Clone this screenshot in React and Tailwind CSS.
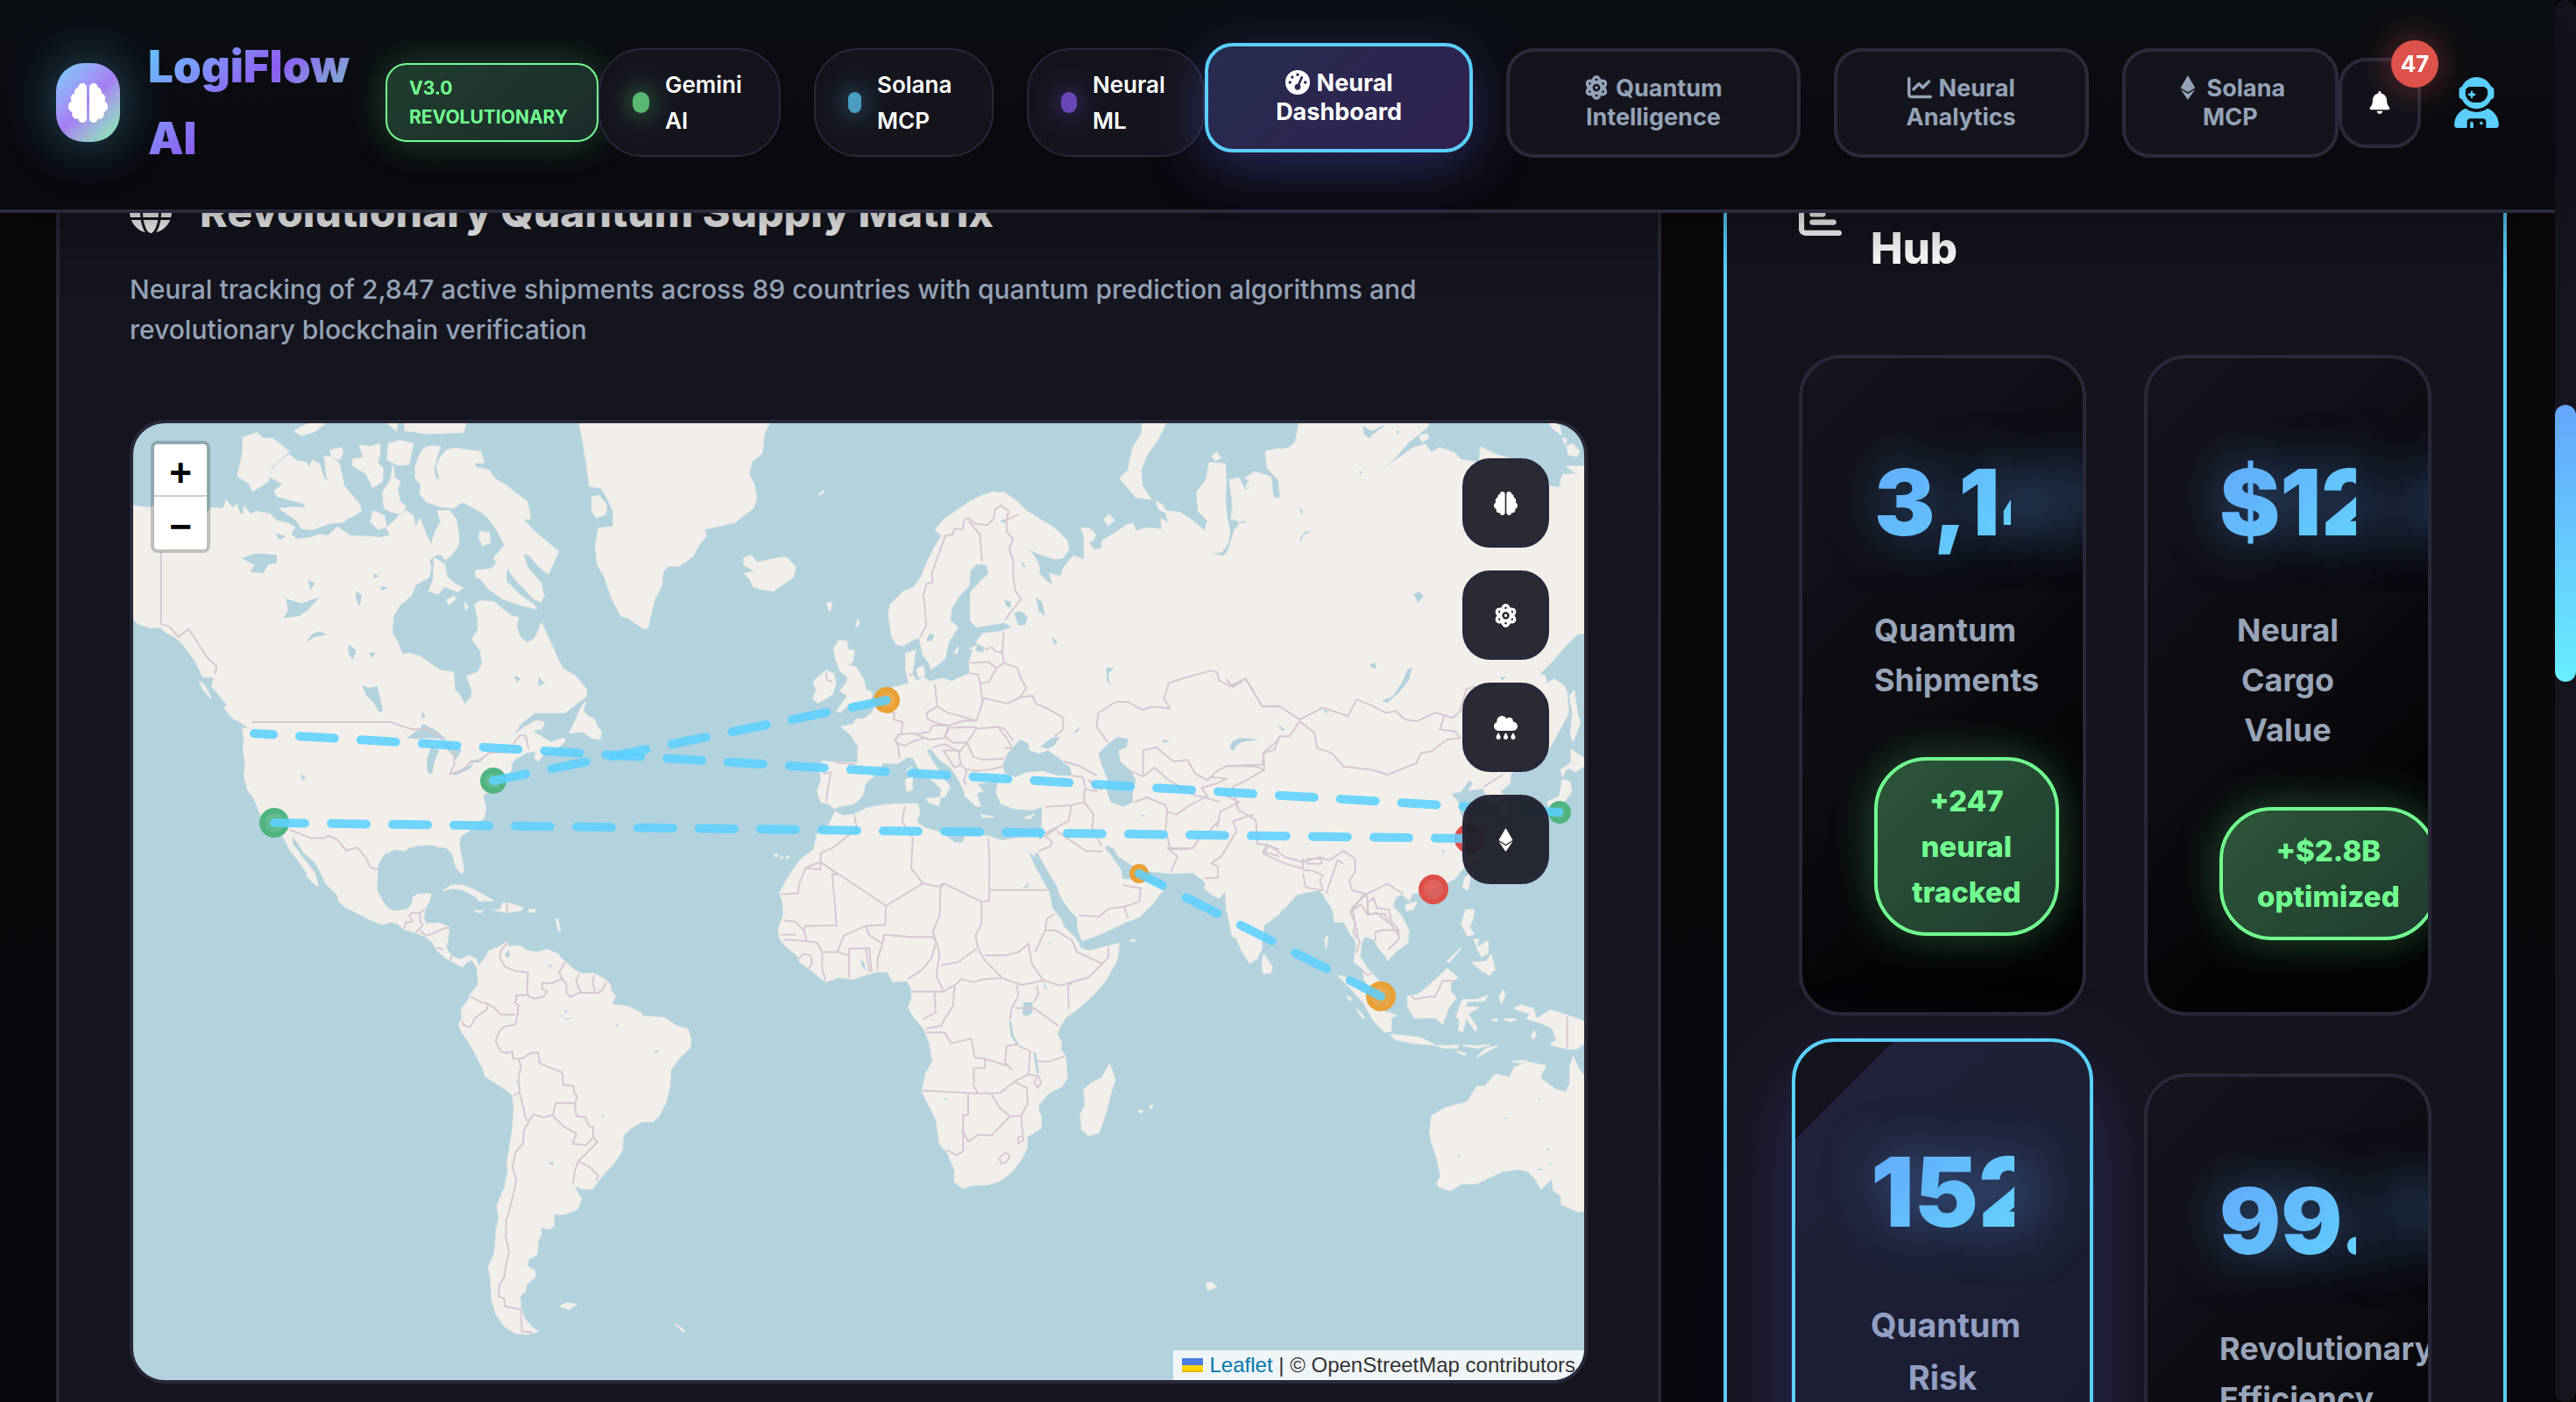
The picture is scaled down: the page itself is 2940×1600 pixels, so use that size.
import { useState } from 'react'
import {
  FaAtom,
  FaBell,
  FaBrain,
  FaChartBar,
  FaChartLine,
  FaCloudRain,
  FaEthereum,
  FaGaugeHigh,
  FaGlobe,
  FaUserAstronaut,
} from 'react-icons/fa6'

const statuses = [
  { lines: ['Gemini', 'AI'], box: 'w-[208px]', dot: 'w-[19px] bg-[#59b872] shadow-[0_0_30px_#59b872]' },
  { lines: ['Solana', 'MCP'], box: 'w-[205px]', dot: 'w-[15px] bg-[#4a9dc0] shadow-[0_0_30px_#4a9dc0]' },
  { lines: ['Neural', 'ML'], box: 'w-[203px]', dot: 'w-[18px] bg-[#6748b4] shadow-[0_0_30px_#6748b4]' },
]

const tabs = [
  { id: 'dashboard', icon: FaGaugeHigh, lines: ['Neural', 'Dashboard'] },
  { id: 'quantum', icon: FaAtom, lines: ['Quantum', 'Intelligence'] },
  { id: 'analytics', icon: FaChartLine, lines: ['Neural', 'Analytics'] },
  { id: 'solana', icon: FaEthereum, lines: ['Solana', 'MCP'] },
]

const layers = [
  { name: 'Neural layer', icon: FaBrain },
  { name: 'Quantum layer', icon: FaAtom },
  { name: 'Weather layer', icon: FaCloudRain },
  { name: 'Blockchain layer', icon: FaEthereum },
]

const stats = [
  { value: '3,147', label: ['Quantum', 'Shipments'], change: '+247 neural tracked' },
  { value: '$12.8B', label: ['Neural', 'Cargo', 'Value'], change: '+$2.8B optimized' },
  { value: '152', label: ['Quantum', 'Risk'], active: true },
  { value: '99.7%', label: ['Revolutionary', 'Efficiency'] },
]

const routes = [
  { from: [290, 838], to: [1780, 928], offset: 18 },
  { from: [313, 940], to: [1677, 958], offset: 5 },
  { from: [563, 892], to: [1012, 800], offset: 2 },
  { from: [1300, 998], to: [1576, 1138], offset: 10 },
]

const ports = [
  { at: [313, 940], r: 14, color: '#4fb47f' },
  { at: [563, 892], r: 12, color: '#4fb47f' },
  { at: [1012, 800], r: 12, color: '#e9a035' },
  { at: [1300, 998], r: 8, color: '#e9a035' },
  { at: [1780, 928], r: 10, color: '#4fb47f' },
  { at: [1677, 958], r: 14, color: '#de4f49' },
  { at: [1636, 1016], r: 14, color: '#de4f49' },
  { at: [1576, 1138], r: 14, color: '#e9a035' },
]

// One sheet per part of the world, each with its own grid
const sheets = [
  {
    // North America, Greenland, Iceland
    transform: 'translate(140 470) scale(0.5102 0.3571)',
    land: [
      '24,303 60,310 72,303 120,318 150,310 190,325 200,310 225,312 232,285 245,312 255,300 262,330 270,330 272,305 285,330 300,322 330,330 345,352 370,360 385,372 375,395 390,410 420,405 440,395 460,400 480,372 510,400 550,402 575,405 600,398 590,375 610,350 618,335 635,320 650,335 655,375 665,345 680,400 690,430 700,385 712,355 705,320 730,318 745,345 752,400 750,430 735,460 722,475 712,458 695,462 685,480 690,500 685,530 655,555 645,590 620,620 605,655 602,710 615,740 625,780 640,775 665,785 690,810 712,830 740,835 742,890 752,905 765,940 780,915 782,890 770,848 795,835 805,805 800,765 782,730 795,700 795,665 788,620 800,608 830,610 855,640 870,655 885,660 880,690 890,725 905,742 920,730 930,705 937,678 950,720 960,750 972,790 985,825 1010,845 1020,860 1037,890 1037,912 1010,940 990,963 920,965 890,1000 870,1042 900,1010 925,990 942,995 938,1015 915,1022 940,1045 960,1060 985,1046 990,1054 970,1080 945,1090 930,1118 922,1110 925,1088 905,1090 880,1110 870,1125 868,1150 850,1170 860,1185 822,1210 805,1230 812,1270 808,1300 785,1330 755,1360 752,1385 760,1440 763,1470 758,1478 745,1455 738,1415 725,1395 705,1392 690,1385 660,1388 640,1395 630,1405 610,1400 585,1415 570,1450 568,1530 573,1568 485,1568 480,1545 455,1510 440,1465 430,1440 405,1410 385,1365 378,1362 380,1385 400,1425 415,1450 430,1480 437,1518 425,1505 410,1470 390,1430 375,1405 365,1375 355,1350 340,1340 310,1295 295,1240 280,1210 272,1165 275,1130 270,1080 272,1050 268,1015 285,1015 270,1000 245,980 228,950 235,940 215,905 200,880 205,850 180,850 165,805 150,775 135,745 120,725 95,705 85,690 60,692 35,680 24,665',
      '270,85 300,70 315,88 335,88 372,130 335,175 325,225 310,240 290,255 283,230 257,208 268,140',
      '372,140 390,160 410,165 418,182 425,158 440,170 450,215 460,228 455,190 452,145 470,150 485,170 495,240 530,300 533,320 515,335 500,345 495,355 465,358 440,370 425,378 400,375 390,350 365,325 352,312 385,308 410,310 405,295 345,272 340,255 360,235 330,210 335,190 345,170',
      '465,125 490,118 492,135 485,155 468,145',
      '530,110 555,115 575,105 575,140 570,165 582,185 580,225 560,245 545,200 515,175 515,155 540,150',
      '595,105 620,95 650,105 640,170 615,172 592,155',
      '605,175 600,220 582,260 585,310 600,322 625,330 633,305 620,290 615,250 620,225 608,215',
      '385,65 400,50 415,42 415,30 460,30 430,65 400,78',
      '585,30 615,30 612,62',
      '630,30 770,30 762,68 680,72 650,65 632,62',
      '655,180 665,140 675,118 690,112 710,115 702,150 695,190 700,215 710,222 703,180 710,150 725,125 745,120 770,125 800,130 808,165 785,165 790,180 820,190 830,215 860,240 880,265 905,290 912,345 895,345 920,385 950,420 975,450 965,480 952,520 930,495 910,460 895,455 905,500 935,550 942,590 935,610 920,600 880,540 865,510 860,545 885,585 920,620 925,632 890,620 850,600 820,570 800,535 790,530 790,510 825,505 838,485 830,470 855,430 840,385 820,345 805,325 780,305 760,290 740,310 710,305 680,290 665,265 668,235 655,215',
      '697,470 720,490 725,530 745,555 760,565 750,578 720,560 705,585 685,575 695,540',
      '725,605 740,592 745,600 730,618',
      '765,612 772,625 768,636',
      '800,385 820,390 822,420 805,430 797,405',
      '560,320 585,335 590,370 572,378 555,355',
      '1020,30 1030,95 1038,170 1045,240 1070,245 1085,280 1098,320 1098,370 1065,375 1058,430 1062,490 1078,530 1085,560 1095,600 1115,655 1130,660 1150,680 1165,695 1175,692 1180,655 1190,600 1205,560 1208,515 1220,495 1245,495 1275,465 1290,425 1305,400 1300,378 1370,355 1410,310 1418,280 1412,235 1400,200 1408,160 1430,135 1435,70 1450,30',
      '1050,275 1065,270 1082,300 1080,330 1060,340 1050,320',
      '1390,470 1405,462 1420,485 1435,480 1450,475 1470,470 1485,468 1505,500 1500,530 1480,550 1455,575 1430,570 1410,560 1405,540 1392,520 1415,512 1390,492',
      '1035,930 1030,960 1040,975 1055,985 1060,1005 1070,1025 1068,1048 1050,1045 1030,1025 1000,1028 1010,1000 1025,950',
      '172,865 182,875 198,918 180,890',
    ],
    water: [
      '265,470 300,455 345,460 345,485 325,492 315,518 285,515 295,492',
      '365,600 400,615 440,595 415,635 395,655 360,662 370,635',
      '410,740 425,712 440,705 458,715 430,722',
      '535,875 550,885 570,880 582,955 575,965 560,930 545,910',
      '505,745 522,765 515,795 505,775',
      '522,575 535,590 530,625 522,600',
      '550,775 565,770 560,790',
      '635,1045 665,1015 672,1000 700,1020 725,1050 690,1045 660,1048',
      '690,1075 708,1085 698,1120 692,1160 682,1155 680,1115',
      '710,1060 740,1065 758,1085 745,1115 738,1100 725,1080',
      '732,1160 765,1140 785,1128 775,1145 745,1164',
      '775,1118 808,1110 800,1122 780,1125',
      '398,1160 410,1172 402,1182',
      '670,960 678,975 668,985',
      '930,850 945,870 930,880',
      '875,845 890,855 882,868',
      '340,390 365,400 352,412',
      '415,540 430,550 420,575',
      '560,520 575,528 562,535',
      '575,560 595,566 580,575',
      '760,790 782,800 770,815',
      '862,500 868,530 862,555 858,530',
    ],
    borders: [
      '86,450 86,680 105,690 125,722 147,697 165,735 190,790 210,815 207,842',
      '288,994 600,994 620,1005 650,1018 680,1015 710,1040 720,1060 740,1085 742,1130 732,1160 760,1150 775,1125 800,1115 820,1092 875,1088 875,1060 890,1035 902,1040 908,1080',
      '373,1338 420,1365 450,1365 460,1357 480,1370 500,1405 525,1395 545,1430 555,1460 573,1465',
    ],
  },
  {
    // Europe and western Russia
    transform: 'translate(900 470) scale(0.3571 0.3571)',
    land: [
      '620,270 650,260 690,262 730,290 760,320 800,345 850,375 890,415 895,445 875,470 850,472 800,455 765,440 785,465 800,495 800,520 830,550 845,555 835,520 870,530 880,500 910,465 945,475 945,450 945,400 935,375 960,375 980,395 975,410 960,420 975,445 1000,440 1003,415 1060,380 1080,365 1100,360 1110,385 1140,375 1170,375 1195,380 1190,345 1215,360 1205,320 1250,325 1290,350 1330,385 1340,350 1310,320 1305,260 1335,220 1345,165 1395,170 1398,230 1395,290 1400,340 1410,380 1405,420 1385,450 1345,455 1390,465 1415,440 1430,385 1440,360 1470,360 1495,415 1475,410 1465,375 1460,350 1415,345 1420,300 1410,220 1440,215 1455,250 1500,262 1530,275 1568,320 1568,1330 810,1330 812,1262 780,1275 720,1270 680,1255 665,1220 670,1185 660,1170 640,1185 600,1190 620,1215 600,1220 612,1262 600,1262 565,1230 560,1210 545,1180 520,1140 480,1110 455,1075 440,1085 460,1120 495,1175 515,1200 500,1232 485,1235 490,1210 480,1200 455,1175 420,1150 400,1110 380,1105 350,1125 300,1125 290,1145 270,1168 245,1190 235,1230 210,1255 165,1262 145,1270 130,1255 105,1250 92,1215 105,1180 100,1140 108,1120 150,1122 222,1125 222,1070 200,1035 170,1010 210,1000 215,985 240,985 268,965 280,930 300,900 330,885 355,880 385,870 375,825 375,775 405,765 400,800 395,840 410,865 430,850 450,865 495,855 520,865 555,850 580,840 578,800 590,765 622,775 628,755 600,740 620,712 680,705 718,690 690,675 600,690 582,670 582,580 610,550 640,520 635,490 600,488 580,510 575,560 545,590 520,630 515,670 540,690 510,740 500,790 480,808 455,825 450,805 430,780 418,722 400,730 365,750 345,745 330,720 320,650 325,620 370,575 400,565 425,530 440,490 465,440 490,400 470,380 500,345 550,310 580,290',
      '160,735 185,735 190,765 210,765 205,800 190,812 215,820 240,860 245,890 268,900 262,925 230,932 195,935 165,962 155,958 190,910 165,895 185,870 190,850 165,830 150,790 145,760',
      '85,860 120,830 145,840 150,870 140,905 95,932 78,920 90,890 80,870',
      '1130,30 1210,30 1180,90 1145,140 1125,190 1130,240 1158,282 1110,275 1080,240 1060,215 1085,190 1100,120 1130,70',
      '1010,345 1025,332 1040,350 1020,365',
      '1175,290 1195,300 1208,325 1185,315',
      '1355,145 1368,132 1380,150 1365,158',
      '378,1148 392,1138 390,1162',
      '375,1178 395,1170 395,1210 378,1215',
      '440,1240 485,1235 480,1262 450,1250',
      '615,1290 655,1297 620,1298',
      '755,1300 785,1290 770,1303',
      '410,825 430,815 435,845 415,850',
      '530,775 542,755 540,772',
      '1525,130 1568,120 1568,195 1530,175',
      '1460,215 1490,195 1540,210 1545,240 1500,255 1490,230',
      '215,690 222,665 226,680',
      '122,615 138,612 132,640',
      '95,268 112,255 108,264',
      '580,760 600,750 596,765',
    ],
    water: [
      '740,1050 765,1062 770,1085 800,1095 830,1085 865,1110 900,1140 905,1165 860,1165 810,1150 760,1155 725,1170 690,1158 685,1130 700,1095',
      '805,1072 840,1045 868,1040 850,1068 828,1080',
      '990,1095 1020,1065 1050,1042 1085,1048 1080,1075 1055,1085 1060,1120 1095,1150 1110,1180 1100,1215 1100,1250 1070,1265 1030,1250 1015,1210 1020,1180 1000,1130',
      '720,645 745,640 765,660 755,685 735,685',
      '790,595 810,610 820,655 800,640',
      '1410,1075 1420,1055 1440,1045 1500,1048 1440,1055 1422,1085',
      '440,735 450,712 465,715 460,735',
      '840,720 860,740 850,748',
      '1015,820 1040,822 1022,840 1028,880 1018,860',
      '1195,1050 1218,1055 1200,1062',
      '910,1030 930,1008 925,1025',
      '745,480 760,500 748,498',
      '690,605 712,610 708,630 695,622',
      '676,350 695,345 690,362',
      '1125,1290 1140,1292 1130,1298',
    ],
    borders: [
      '420,722 440,685 435,620 430,590 442,550 460,548 458,520 500,400 525,395 530,375 557,378 560,350 575,342 595,360 635,365 655,345 660,315 680,302 703,320 697,350 735,330',
      '575,352 612,395 618,480',
      '697,350 697,385 718,410 705,440 718,480 718,530 725,575 743,600 690,670',
      '688,705 683,770 660,768 650,755 628,762',
      '683,770 688,805 665,822 638,802 580,805',
      '665,822 640,865 612,870 605,842 580,838',
      '688,805 730,820 745,860 760,885 740,915 780,910 790,935 825,950 878,980 875,1020 850,1040',
      '740,915 700,935 625,918 620,930 612,870',
      '620,930 600,990 560,990 515,1005 480,1000 445,985 440,965 475,945 467,872',
      '475,945 510,965 540,972 600,990',
      '385,843 400,843',
      '600,1010 515,1012 500,1040 525,1060 570,1060 600,1015 670,1010 700,1050 715,1080 690,1075',
      '670,1010 690,1015 718,1055',
      '570,1060 590,1105 620,1115 690,1110',
      '300,955 340,965 335,985 365,995 360,1030 340,1050 350,1070 355,1110',
      '345,1035 400,1030 435,1045 400,1055 370,1070 345,1060',
      '400,1035 450,1025 460,1005 510,1005 500,1045 450,1050 435,1045',
      '460,1075 500,1065 545,1090 550,1130 530,1140 495,1085 545,1085',
      '550,1130 570,1150 560,1180 568,1195',
      '570,1145 600,1150 650,1145 690,1135',
      '545,1090 570,1060',
      '110,1160 135,1155 125,1210 120,1250',
      '150,1122 215,1130',
      '120,835 122,860 140,865',
      '1020,1060 985,1010 990,965 1045,930 1085,930 1130,955 1160,945 1220,950 1200,920 1215,870 1260,855 1350,830 1370,835 1375,860 1410,880 1460,855 1515,945 1568,945',
      '1090,1150 1133,1168 1133,1085 1175,1075 1230,1120 1275,1115 1300,1160 1340,1180 1370,1150 1400,1135 1515,1130 1520,1090 1568,1050',
      '1133,1168 1170,1140 1215,1180 1300,1230 1340,1235 1320,1205 1370,1190 1400,1175 1345,1170',
      '1105,1250 1145,1235 1205,1260 1210,1280 1240,1290 1275,1265 1330,1235 1380,1250',
      '1210,1280 1205,1340 1220,1400 1280,1400',
      '820,1265 900,1260 945,1250 975,1290 970,1330 1000,1390',
      '905,1260 895,1310 820,1350',
      '880,1120 930,1135 985,1165',
      '900,1165 940,1170 950,1210 985,1215 960,1180 1000,1210',
      '945,1250 945,1210',
      '1370,1330 1380,1280 1440,1250 1400,1230',
    ],
  },
  {
    // Siberia, China, Japan
    transform: 'translate(1400 470) scale(0.3333 0.3827)',
    land: [
      '250,30 235,95 210,112 135,120 140,170 178,205 185,260 160,260 150,210 90,195 65,225 90,245 60,245 25,300 40,330 70,320 95,360 100,388 72,380 62,345 30,350 0,430 0,1480 20,1568 125,1568 125,1530 200,1480 240,1440 300,1430 320,1425 340,1455 360,1480 375,1525 400,1520 430,1568 610,1568 585,1530 565,1480 575,1450 600,1440 625,1460 635,1440 700,1425 745,1410 780,1395 807,1365 870,1330 830,1230 800,1205 790,1165 765,1140 800,1135 830,1100 845,1110 830,1130 880,1125 890,1150 900,1200 960,1200 950,1150 935,1135 970,1110 972,1080 1040,1050 1080,1030 1105,1005 1140,950 1170,900 1165,840 1155,820 1120,800 1095,815 1090,790 1070,785 1110,750 1160,700 1200,665 1230,662 1230,165 1165,165 1200,188 1150,190 1140,230 1105,225 1060,160 960,140 920,130 870,108 865,155 800,145 780,125 730,110 700,125 680,100 640,110 575,150 520,185 570,145 620,95 690,45 690,30',
      '1190,835 1200,900 1210,930 1185,985 1178,960 1185,900 1175,850',
      '1180,1010 1230,1040 1230,1055 1195,1075 1175,1065 1160,1070 1150,1090 1145,1070 1180,1050',
      '1150,1100 1175,1105 1180,1135 1155,1165 1105,1185 1100,1165 1140,1150',
      '612,1475 650,1465 640,1485 620,1490',
      '815,1395 833,1380 825,1425 810,1420',
      '1102,30 1140,45 1145,70 1115,50',
      '1165,105 1185,100 1207,120 1200,135 1170,130',
      '1150,80 1165,85 1158,98',
      '660,75 685,68 692,80 670,92',
    ],
    water: [
      '635,765 625,800 590,840 550,870 530,865 570,850 600,810 620,770',
      '10,1005 20,985 60,978 110,982 60,985 25,1000 20,1012',
      '465,45 500,60 530,45 545,42 500,70 488,82 470,70',
      '250,380 270,360 290,358 262,372 255,390',
      '450,180 465,180 460,188',
      '640,545 660,540 675,552 655,572',
      '490,755 510,752 512,768 495,765',
      '330,890 348,895 340,902',
      '175,935 200,950 190,955',
      '935,795 958,792 945,803',
      '736,1310 748,1312 742,1320',
      '250,285 262,300 255,310',
      '580,58 592,62 585,70',
    ],
    borders: [
      '0,800 20,825 65,798 120,880 180,880 250,920 330,885 415,910 445,860 500,880 545,900 580,895 610,920 650,925 715,900 775,915 800,895 820,830 850,822',
      '250,925 300,960 310,1005 360,1020 400,1060 500,1070 550,1085 650,1050 665,1020 700,1015 755,980 800,975 780,955 730,950 745,910',
      '250,925 215,970 180,970 165,1010 125,1020 130,1070 100,1085 60,1105 20,1120 40,1190 100,1220 105,1290 145,1295 200,1330 260,1345 320,1330 350,1340 400,1312 440,1335 440,1375 420,1400 430,1430 480,1440 550,1410 605,1440',
      '145,1295 125,1320 200,1350 260,1365 262,1335',
      '275,1335 325,1335 325,1350 275,1350 275,1335',
      '262,1380 270,1420 330,1430 320,1400 330,1385 290,1370 262,1370',
      '400,1350 380,1340 340,1440',
      '480,1440 430,1480 440,1530 450,1568',
      '480,1440 485,1500 540,1500 590,1568',
      '880,1120 945,1085',
      '0,1058 100,1060 130,1070',
    ],
  },
  {
    // Central and South America
    transform: 'translate(140 1000) scale(0.4847 0.3827)',
    land: [
      '480,0 510,45 508,75 525,95 550,110 580,130 610,145 635,138 650,145 662,160 690,170 715,183 730,200 742,225 760,245 785,262 800,272 808,260 822,250 835,275 838,325 820,355 815,370 797,400 800,425 792,445 800,470 812,490 830,530 848,575 855,600 880,620 905,640 918,655 922,690 918,760 912,810 905,860 908,880 900,930 882,985 886,1020 880,1060 878,1100 875,1130 862,1165 866,1200 870,1270 880,1310 900,1345 925,1365 950,1368 978,1360 965,1350 945,1320 937,1290 935,1255 948,1240 950,1220 972,1195 970,1180 952,1165 955,1145 975,1130 978,1090 985,1070 985,1048 1005,1055 1015,1045 1015,1010 1040,1010 1070,995 1080,965 1070,945 1062,925 1085,935 1105,935 1120,910 1140,880 1155,860 1176,820 1178,775 1195,755 1220,735 1250,732 1262,718 1278,680 1288,630 1290,580 1310,545 1335,515 1338,490 1330,458 1305,450 1275,425 1225,420 1220,410 1190,392 1150,385 1160,360 1150,345 1147,325 1135,310 1110,293 1080,293 1060,280 1042,258 1030,245 1025,235 1000,222 975,230 950,225 942,215 925,210 908,214 905,198 885,215 862,225 858,240 838,272 832,250 815,240 800,250 790,250 773,240 760,215 765,195 768,155 745,143 715,145 708,130 712,100 722,75 725,55 695,57 685,65 680,90 670,102 640,108 625,100 610,75 597,40 597,0',
      '432,0 445,0 460,28 457,30',
      '755,45 775,30 800,30 830,45 850,60 872,75 840,75 830,62 800,42 775,38',
      '873,103 890,103 895,83 915,85 942,98 935,105 905,110',
      '957,102 972,103 968,110 955,108',
      '828,105 848,106 842,111',
      '1030,1285 1045,1275 1068,1280 1050,1293',
      '1302,1338 1325,1360 1318,1358',
      '1020,130 1024,130 1030,165 1027,165',
    ],
    water: [
      '900,235 908,222 912,240 905,247',
      '925,612 935,618 932,628',
      '1003,858 1015,852 1013,865',
      '1040,400 1048,405 1042,410',
      '1003,268 1010,265 1008,278',
      '1250,526 1266,520 1255,532',
      '1125,722 1136,708 1130,722',
      '1160,442 1167,446 1165,454',
      '1030,410 1040,428 1060,425 1045,432',
    ],
    borders: [
      '662,160 668,140 683,138 675,120 680,112 700,112 700,140 708,148 690,170',
      '700,112 712,100',
      '700,165 715,180 735,172 755,158 768,157',
      '740,215 755,222',
      '773,240 773,255',
      '905,202 890,225 888,245 900,272 925,285 955,290 952,330 955,360 970,368 990,362 1000,345 988,340 988,320 1010,322 1035,308 1028,290 1042,258',
      '955,357 925,358 928,370 922,380 932,385 930,415 925,445 900,450 888,462 878,495 890,525 905,530 918,525 918,545 932,548',
      '925,415 890,415 875,395 860,383 845,378 820,363',
      '860,383 858,400 830,425 818,453 800,445 800,435',
      '932,548 945,543 960,530 978,528 982,560 1010,575 1035,587 1038,625 1062,628 1062,645 1070,660 1065,680 1020,678 1013,715 990,722 968,713 958,730 950,730 945,700 935,650 932,600 938,570 932,548',
      '920,657 932,648',
      '1065,680 1068,718 1090,722 1098,748 1108,750 1108,780 1090,805 1060,800 1068,770 1040,750 1013,718',
      '1108,780 1118,795 1095,825 1073,852 1100,870 1120,895 1115,910',
      '1073,852 1065,880 1060,920',
      '958,730 945,760 943,800 925,825 918,870 927,910 918,960 910,1000 903,1030 902,1080 910,1120 903,1160 898,1200 887,1220 885,1255 898,1262 900,1285 938,1295 940,1360 965,1362',
      '1035,308 1045,325 1045,350 1055,363 1075,350 1120,350 1130,340 1138,320',
      '1075,293 1068,315 1072,330 1080,350',
      '1110,297 1107,320 1112,350',
      '905,83 905,110',
    ],
  },
  {
    // Africa, Arabia, India
    transform: 'translate(860 900) scale(0.3827 0.3827)',
    land: [
      '245,72 265,84 300,80 340,60 400,50 490,48 495,75 485,100 510,120 560,135 600,165 625,165 630,145 700,145 740,158 800,148 850,150 855,180 845,195 830,185 840,205 815,182 840,240 880,310 890,360 915,390 925,415 960,450 970,465 975,480 1000,487 1090,465 1085,510 1050,575 1010,620 965,660 930,685 912,715 905,735 918,760 915,780 930,800 935,865 920,890 880,910 850,945 850,965 857,980 857,1015 815,1040 815,1075 800,1105 770,1145 735,1172 700,1183 650,1185 625,1195 600,1175 600,1140 580,1090 555,1060 545,990 520,940 503,905 515,850 535,815 525,760 510,720 480,685 462,655 472,630 472,600 458,575 415,578 400,548 370,548 340,555 300,570 255,565 215,578 180,550 140,520 130,500 100,475 78,450 75,420 90,380 88,340 78,315 105,265 140,215 180,185 190,140 225,110 240,80',
      '1062,825 1078,870 1065,910 1050,970 1030,1028 1000,1037 980,1020 975,975 990,945 985,900 1010,880 1040,865',
      '862,60 866,100 865,150 845,165 855,205 880,250 905,290 915,320 940,360 965,385 968,420 980,455 1010,445 1070,420 1110,400 1150,385 1190,345 1220,305 1195,290 1160,275 1150,250 1140,262 1120,275 1098,273 1095,245 1080,225 1060,195 1045,180 1055,170 1075,180 1090,205 1130,230 1150,235 1165,225 1180,248 1245,255 1310,252 1335,270 1350,285 1345,300 1370,320 1390,328 1408,305 1410,350 1425,400 1440,440 1460,490 1480,522 1500,510 1515,480 1515,415 1568,375 1568,60',
      '1520,500 1535,520 1545,545 1525,555 1517,530',
      '1350,1478 1365,1475 1380,1488 1355,1498',
      '1122,455 1137,454 1135,459',
      '1148,964 1160,962 1156,970',
      '1180,952 1190,946 1187,955',
      '62,200 72,198 68,207',
      '80,208 88,207 84,212',
      '98,208 106,203 103,211',
    ],
    water: [
      '805,640 832,640 832,670 815,682 802,675',
      '762,695 768,695 776,740 793,768 785,768 768,740',
      '834,788 842,790 852,850 845,852',
      '865,575 876,602 868,598',
      '318,515 330,520 335,545 326,535',
      '563,926 580,926 572,931',
      '740,905 760,890 750,905',
      '880,460 888,462 884,467',
      '800,300 815,290 818,280 820,296',
    ],
    borders: [
      '300,80 308,120 280,145 235,180 200,195 200,222 395,352 505,285 470,240 475,150 443,100 452,55',
      '200,222 180,228 155,240 200,243 200,222',
      '155,240 135,290 133,315 78,318',
      '505,285 550,295 568,285 680,340 703,337 703,200 700,150',
      '703,305 875,305',
      '205,225 250,258 235,258 248,410 155,412 150,425 125,400 90,395',
      '150,425 160,458 190,462 205,490 250,490 270,440 335,412 393,408 395,352',
      '335,412 345,440 385,465 390,438 470,445 535,445 545,460 555,495 545,560 565,605',
      '568,285 558,300 555,380 535,430 545,460 530,510 500,545 460,570',
      '680,340 680,405 662,440 670,480 690,515 740,565',
      '560,530 610,520 665,480',
      '690,500 750,500 790,490 820,465 825,495 830,525 865,575 800,588 740,568 690,570 655,580 620,570 600,590 595,650 570,690 560,710 515,718',
      '472,608 565,608 600,588',
      '540,610 543,670 505,690',
      '515,730 570,730 590,762 650,748 660,805 690,808 690,835 657,837 657,890 670,912',
      '690,808 760,830 770,840 750,820 755,770 790,765',
      '503,903 540,905 670,912 735,910 780,875 820,855 825,785 790,770',
      '640,915 640,975 625,975 625,1085 605,1095 575,1080',
      '625,1025 640,1055 670,1035 710,1037 765,980 735,955 710,915',
      '765,980 798,978 818,940 815,895 780,878',
      '798,978 803,1035 805,1050 790,1060 788,1045 800,1038',
      '732,1105 750,1088 765,1098 755,1115 740,1122 732,1105',
      '845,815 880,817 930,800',
      '820,855 850,860 858,880 848,895 838,880 845,860',
      '780,657 835,657 910,710',
      '940,660 938,590 950,582',
      '865,575 915,590 1000,565 1040,525 965,490 950,455 900,425 870,425 840,490',
      '870,425 875,390 900,375',
      '1040,525 1058,505 1058,475',
      '785,588 790,620 770,657 765,690',
      '845,590 850,615 835,640',
      '205,490 205,540 215,575',
      '285,565 285,480 345,478 352,550',
      '335,478 345,550',
      '370,545 370,510 385,465',
      '250,490 285,500',
      '90,452 160,458',
      '82,438 125,438',
      '135,510 150,495 170,500 175,520 165,540',
      '970,380 1030,385 1060,360 1105,355 1150,340 1155,300 1100,290',
      '1105,355 1118,390',
      '905,130 990,188 1040,190',
      '850,188 885,175 890,160 870,145 905,120',
      '1235,180 1265,205 1245,250',
      '1235,180 1310,180 1330,150 1360,130 1385,100',
      '1345,270 1385,268 1385,235 1365,225 1395,205 1440,130 1430,100 1490,80',
      '1568,205 1520,190 1530,170 1568,185',
    ],
  },
  {
    // South-east Asia and Australia
    transform: 'translate(1400 980) scale(0.3571 0.3954)',
    land: [
      '0,0 0,150 20,210 50,270 75,302 105,275 112,230 118,195 150,165 225,105 295,92 310,105 340,140 345,185 375,185 390,170 400,210 415,250 408,300 435,320 440,350 465,385 495,395 500,370 470,340 450,320 425,285 430,245 440,225 470,235 490,265 510,285 515,295 540,270 578,245 582,210 560,170 530,140 540,112 570,100 625,80 700,70 745,30 770,0',
      '357,340 380,345 400,365 430,385 460,400 490,430 525,460 525,500 505,502 470,470 440,420 400,380',
      '525,510 580,515 620,520 665,540 600,535 540,525',
      '578,400 610,395 640,375 670,350 705,320 738,345 715,360 715,385 732,405 710,430 690,478 665,460 600,462 580,430',
      '745,430 755,410 800,410 832,398 825,412 770,415 760,430 805,432 770,450 800,490 795,500 765,460 755,500 742,498 745,465 735,460',
      '785,302 830,300 845,280 857,320 840,338 815,325',
      '765,150 790,150 785,180 775,200 790,220 770,225 750,190',
      '705,300 747,262 745,265 710,302',
      '790,235 805,235 800,255',
      '800,260 835,240 835,275 815,285',
      '920,435 940,425 980,435 990,465 1035,440 1090,455 1150,475 1150,530 1120,550 1095,552 1035,540 1055,525 1040,490 1000,475 960,465 970,450',
      '800,575 830,550 865,543 825,562',
      '670,541 700,543 740,541 738,548 690,548',
      '755,541 800,543 840,540 800,549',
      '735,558 765,565 760,570',
      '848,468 865,466 862,473',
      '885,465 925,466 905,472',
      '872,400 885,382 888,398 878,420',
      '975,515 982,500 988,512 980,522',
      '515,445 540,455 525,462',
      '915,588 960,585 940,592',
      '385,400 398,405 395,412',
      '415,435 440,460 435,462',
      '1150,1020 1120,1020 1070,1000 1070,975 1045,960 1040,925 1005,955 985,925 965,905 930,898 880,905 820,930 800,940 750,940 715,960 680,950 672,940 685,920 672,865 655,820 650,790 655,745 700,722 770,705 800,660 825,660 860,625 905,635 920,605 960,590 1020,600 1000,635 1050,668 1085,678 1098,650 1098,600 1108,575 1125,610 1150,640',
      '765,55 778,60 770,92 755,85',
      '575,135 605,127 595,148 575,150',
      '120,280 145,315 140,332 115,330',
      '315,235 323,225 318,260',
    ],
    water: [
      '885,750 900,750 892,755',
      '995,693 1005,694 1000,698',
      '1020,838 1035,842 1025,845',
      '988,898 1010,898 1005,903',
      '738,858 748,860 742,864',
      '1030,880 1040,882 1034,886',
    ],
    borders: [
      '1088,458 1088,550',
      '590,398 600,408 650,400 665,402 680,375 690,355 730,355',
      '395,155 420,130 440,100',
      '395,155 412,190 405,215 425,240 415,275',
      '450,165 450,130 470,115 480,145 520,150 525,180 550,210 550,235 515,265',
      '475,240 475,215 500,208 550,210',
      '395,155 430,135 450,165 480,158 520,190',
      '430,322 450,338 465,335',
    ],
  },
]

function WorldMap() {
  return (
    <svg
      viewBox="152 484 1656 1092"
      preserveAspectRatio="xMidYMid slice"
      className="block h-full w-full"
      role="img"
      aria-label="Shipment routes"
    >
      {sheets.map((sheet, i) => (
        <g key={i} transform={sheet.transform} fill="#f2efea" stroke="#e2e6e4" strokeWidth="2">
          {sheet.land.map((points) => (
            <polygon key={points} points={points} vectorEffect="non-scaling-stroke" strokeLinejoin="round" />
          ))}
        </g>
      ))}
      {/* second pass without an outline so joins between sheets stay clean */}
      {sheets.map((sheet, i) => (
        <g key={i} transform={sheet.transform} fill="#f2efea">
          {sheet.land.map((points) => (
            <polygon key={points} points={points} />
          ))}
        </g>
      ))}
      {sheets.map((sheet, i) => (
        <g key={i} transform={sheet.transform}>
          <g fill="#b2d2de">
            {sheet.water.map((points) => (
              <polygon key={points} points={points} />
            ))}
          </g>
          <g fill="none" stroke="#d6c8d1" strokeWidth="2" strokeLinejoin="round">
            {sheet.borders.map((points) => (
              <polyline key={points} points={points} vectorEffect="non-scaling-stroke" />
            ))}
          </g>
        </g>
      ))}
      {ports.map(({ at, r, color }) => (
        <circle
          key={at.join()}
          cx={at[0]}
          cy={at[1]}
          r={r}
          fill={color}
          fillOpacity="0.88"
          stroke={color}
          strokeWidth="6"
        />
      ))}
      {routes.map(({ from, to, offset }) => (
        <line
          key={from.join()}
          x1={from[0]}
          y1={from[1]}
          x2={to[0]}
          y2={to[1]}
          stroke="#5bd0ff"
          strokeOpacity="0.86"
          strokeWidth="10"
          strokeLinecap="round"
          strokeDasharray="40 30"
          strokeDashoffset={offset}
        />
      ))}
    </svg>
  )
}

function Header() {
  const [tab, setTab] = useState('dashboard')

  return (
    <header className="relative z-10 flex shrink-0 items-center border-b-4 border-[#2a2a3e] bg-linear-to-b from-[#0b0f13] via-[#0a0b10] to-[#09090e] px-16 pt-[35px] pb-10 shadow-[0_16px_64px_rgba(0,0,0,0.4)]">
      {/* Logo */}
      <div className="flex w-[619px] shrink-0 items-center">
        <div className="flex h-[90px] w-[73px] shrink-0 items-center justify-center rounded-[32px] bg-linear-135 from-[#72d2fb] via-[#a67df3] to-[#7ef5a2] text-white shadow-[0_0_60px_rgba(91,208,255,0.4)]">
          <FaBrain className="h-[45px] w-[45px]" />
        </div>
        <h1 className="ml-8 w-[232px] bg-linear-135 from-[#54ccff] via-[#8b5cf0] via-48% to-[#55f09a] bg-clip-text text-[51px] leading-[82px] font-black text-transparent">
          LogiFlow
          <br />
          AI
        </h1>
        <div className="ml-auto w-[243px] rounded-[24px] border-2 border-[#72fd90] bg-linear-135 from-[#213d2e] to-[#1b2c2b] px-[25px] py-[10px] text-[21px] leading-[33px] font-bold text-[#72fd90] shadow-[0_0_40px_rgba(114,253,144,0.25)]">
          V3.0
          <br />
          REVOLUTIONARY
        </div>
      </div>

      {/* Status */}
      <div className="flex shrink-0 gap-[38px]">
        {statuses.map((status) => (
          <div
            key={status.lines[0]}
            className={`flex h-[124px] items-center gap-[18px] rounded-[50px] border-2 border-[#28283a] bg-[#14141d] pl-[37px] text-[26px] leading-[41px] font-semibold text-white ${status.box}`}
          >
            <span className={`h-6 shrink-0 rounded-full ${status.dot}`} />
            <span>
              {status.lines[0]}
              <br />
              {status.lines[1]}
            </span>
          </div>
        ))}
      </div>

      {/* Tabs */}
      <nav className="grid flex-1 grid-cols-[306fr_335fr_291fr_247fr] items-center gap-[38px]">
        {tabs.map(({ id, icon: Icon, lines }) => (
          <button
            key={id}
            type="button"
            onClick={() => setTab(id)}
            className={
              'h-[125px] rounded-[32px] border-4 text-center text-[27px] leading-[33px] font-bold ' +
              (tab === id
                ? '-mt-3 border-[#5bd0ff] bg-linear-135 from-[#262c50] to-[#30214f] text-white shadow-[0_16px_64px_rgba(91,95,214,0.4)]'
                : 'border-[#2a2a3c] bg-[#14141d] text-[#94a3b8]')
            }
          >
            <Icon className="mr-2 inline-block h-7 w-7 align-[-4px]" />
            {lines[0]}
            <br />
            {lines[1]}
          </button>
        ))}
      </nav>

      {/* Account */}
      <div className="flex shrink-0 items-center gap-[38px]">
        <button
          type="button"
          aria-label="Notifications"
          className="relative flex h-[103px] w-[94px] items-center justify-center rounded-[32px] border-4 border-[#2a2a3c] bg-[#12121a] text-white"
        >
          <FaBell className="h-[26px] w-[26px]" />
          <span className="absolute -top-6 -right-6 flex h-[54px] w-[54px] items-center justify-center rounded-full bg-[#de524c] text-[26px] font-bold shadow-[0_0_40px_rgba(222,82,76,0.5)]">
            47
          </span>
        </button>
        <FaUserAstronaut className="h-[58px] w-[51px] text-[#5bd0ff]" />
      </div>
    </header>
  )
}

function SupplyMatrix() {
  return (
    <section className="-mt-10 min-w-0 border-x-4 border-[#28283a] bg-[#15151f] px-20">
      <h2 className="flex items-center gap-8 text-[48px] leading-[78px] font-extrabold text-white">
        <FaGlobe className="h-12 w-12 shrink-0" />
        Revolutionary Quantum Supply Matrix
      </h2>
      <p className="mt-[26px] w-[1540px] max-w-full text-[30px] leading-[46px] font-medium text-[#94a3b8]">
        Neural tracking of 2,847 active shipments across 89 countries with quantum prediction algorithms and
        revolutionary blockchain verification
      </p>

      <div className="relative mt-20 h-[1100px] overflow-hidden rounded-[40px] border-4 border-[#28283a] bg-[#b2d2de]">
        <WorldMap />

        {/* Zoom */}
        <div className="absolute top-5 left-5 flex w-[68px] flex-col rounded-lg border-4 border-black/20 bg-white bg-clip-padding font-['Liberation_Sans',sans-serif] text-[44px] leading-[50px] font-bold text-black">
          <button type="button" aria-label="Zoom in" className="h-[60px] border-b-2 border-[#ccc] pt-2">
            +
          </button>
          <button type="button" aria-label="Zoom out" className="h-[60px] pt-2">
            −
          </button>
        </div>

        {/* Layers */}
        <div className="absolute top-10 right-10 flex flex-col gap-[26px]">
          {layers.map(({ name, icon: Icon }) => (
            <button
              key={name}
              type="button"
              aria-label={name}
              className="flex h-[102px] w-[99px] items-center justify-center rounded-[32px] border-4 border-[#28283a] bg-[#15151f]/90 text-white backdrop-blur-2xl"
            >
              <Icon className="h-[27px] w-[27px]" />
            </button>
          ))}
        </div>

        <div className="absolute right-0 bottom-0 flex h-[34px] items-center bg-white/80 px-[10px] font-['Liberation_Sans',sans-serif] text-[24px] leading-[34px] text-[#333]">
          <a href="#leaflet" className="flex items-center text-[#0078a8]">
            <svg viewBox="0 0 12 8" className="mr-2 h-4 w-6">
              <path fill="#4C7BE1" d="M0 0h12v4H0z" />
              <path fill="#FFD500" d="M0 4h12v3H0z" />
              <path fill="#E0BC00" d="M0 7h12v1H0z" />
            </svg>
            Leaflet
          </a>
          <span className="whitespace-pre"> | © OpenStreetMap contributors</span>
        </div>
      </div>
    </section>
  )
}

function StatCard({ stat }) {
  const { value, label, change, active } = stat
  return (
    <article
      className={
        'min-h-[754px] overflow-hidden rounded-[48px] border-4 text-center ' +
        (active
          ? '-mx-2 -mt-10 border-[#5bd0ff] bg-[linear-gradient(135deg,#12131b_78px,#21223a_79px,#1b1e32_50%,#17172a)] px-[86px] pt-[84px] text-[#929fc3] shadow-[0_40px_100px_rgba(91,95,214,0.35)]'
          : 'border-[#28283a] bg-linear-135 from-[#14151f] via-[#0b0b10] to-[#010102] px-[82px] py-[81px] text-[#98a4b8]')
      }
    >
      <div
        className={
          'bg-linear-135 from-[#64a5fb] to-[#68e4ff] bg-clip-text text-left font-black whitespace-nowrap text-transparent [text-shadow:0_0_60px_rgba(96,165,250,0.5)] ' +
          (active ? 'text-[110px] leading-[175px]' : 'text-[104px] leading-[167px]')
        }
      >
        {value}
      </div>
      <div className={'mt-[34px] font-bold ' + (active ? 'text-[38px] leading-[60px]' : 'text-[36px] leading-[57px]')}>
        {label.map((word) => (
          <div key={word}>{word}</div>
        ))}
      </div>
      {change && (
        <div className="mt-[59px] w-min rounded-[60px] border-4 border-[#72fd90] bg-linear-135 from-[#2c5639] to-[#203c30] px-[39px] py-5 text-[33px] leading-[52px] font-extrabold text-[#72fd90] shadow-[0_0_50px_rgba(114,253,144,0.3)]">
          {change}
        </div>
      )}
    </article>
  )
}

function AnalyticsHub() {
  return (
    <section className="-mt-10 min-w-0 border-x-4 border-[#5bd0ff] bg-[#15141e] px-[82px] pt-5">
      <h2 className="flex items-start gap-[33px] text-[49px] leading-[78px] font-extrabold text-white">
        <FaChartBar className="h-[49px] w-[49px] shrink-0" />
        <span className="pt-[22px]">Hub</span>
      </h2>
      <div className="mt-[82px] grid grid-cols-2 gap-[66px] *:min-w-0">
        {stats.map((stat) => (
          <StatCard key={stat.value} stat={stat} />
        ))}
      </div>
    </section>
  )
}

export default function App() {
  return (
    <div className="flex h-screen overflow-hidden bg-[#060608] font-['Inter',sans-serif] antialiased">
      <div className="flex min-w-0 flex-1 flex-col">
        <Header />
        <main className="grid min-h-0 flex-1 grid-cols-[1832fr_894fr] gap-[71px] overflow-hidden bg-linear-to-b from-[#0a0809] via-[#08080b] to-[#08080f] pr-[55px] pl-16">
          <SupplyMatrix />
          <AnalyticsHub />
        </main>
      </div>
      {/* Scrollbar */}
      <div className="w-6 shrink-0 rounded-xl bg-[#15151f] pt-[462px]">
        <div className="h-[316px] rounded-xl bg-linear-to-b from-[#64a5fb] to-[#67eeff]" />
      </div>
    </div>
  )
}
